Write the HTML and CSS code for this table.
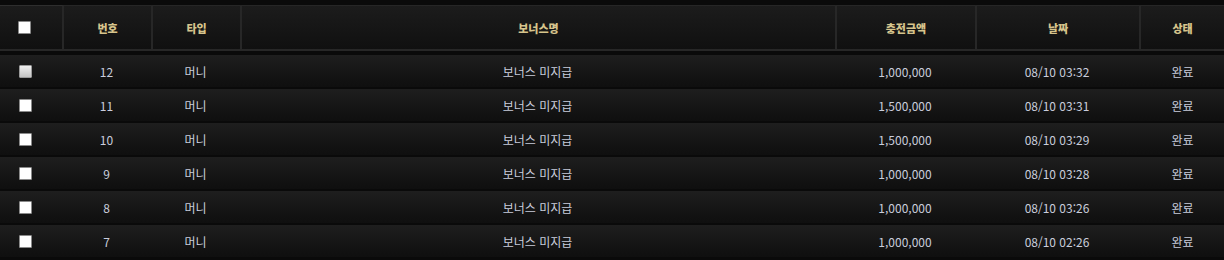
FILE: index.html
```html
<!DOCTYPE html>
<html lang="ko">
<head>
<meta charset="utf-8">
<link rel="stylesheet" href="styles.css">
</head>
<body>
<div class="wrap">
<table class="list">
  <colgroup>
    <col class="c-chk"><col class="c-no"><col class="c-type"><col class="c-name"><col class="c-amt"><col class="c-date"><col class="c-state">
  </colgroup>
  <thead>
    <tr>
      <th class="first"><input type="checkbox" class="chk"></th>
      <th>번호</th>
      <th>타입</th>
      <th>보너스명</th>
      <th>충전금액</th>
      <th>날짜</th>
      <th class="last">상태</th>
    </tr>
  </thead>
  <tbody>
    <tr><td class="first"><input type="checkbox" class="chk dis" disabled></td><td>12</td><td>머니</td><td>보너스 미지급</td><td>1,000,000</td><td>08/10 03:32</td><td class="last">완료</td></tr>
    <tr><td class="first"><input type="checkbox" class="chk"></td><td>11</td><td>머니</td><td>보너스 미지급</td><td>1,500,000</td><td>08/10 03:31</td><td class="last">완료</td></tr>
    <tr><td class="first"><input type="checkbox" class="chk"></td><td>10</td><td>머니</td><td>보너스 미지급</td><td>1,500,000</td><td>08/10 03:29</td><td class="last">완료</td></tr>
    <tr><td class="first"><input type="checkbox" class="chk"></td><td>9</td><td>머니</td><td>보너스 미지급</td><td>1,000,000</td><td>08/10 03:28</td><td class="last">완료</td></tr>
    <tr><td class="first"><input type="checkbox" class="chk"></td><td>8</td><td>머니</td><td>보너스 미지급</td><td>1,000,000</td><td>08/10 03:26</td><td class="last">완료</td></tr>
    <tr><td class="first"><input type="checkbox" class="chk"></td><td>7</td><td>머니</td><td>보너스 미지급</td><td>1,000,000</td><td>08/10 02:26</td><td class="last">완료</td></tr>
  </tbody>
</table>
</div>
</body>
</html>
```
FILE: styles.css
```css
html, body {
  margin: 0;
  padding: 0;
  background: #0a0a0a;
}
.wrap {
  padding-top: 5px;
  width: 1224px;
}
.list {
  width: 1224px;
  border-collapse: separate;
  border-spacing: 0;
  table-layout: fixed;
  font-family: "Noto Sans CJK KR", "Noto Sans", sans-serif;
  font-size: 12px;
}
.c-chk { width: 64px; }
.c-no { width: 89px; }
.c-type { width: 89px; }
.c-name { width: 595px; }
.c-amt { width: 140px; }
.c-date { width: 164px; }
.c-state { width: 83px; }

.list thead th {
  height: 43px;
  padding: 0;
  color: #d6c48c;
  font-weight: 900;
  font-size: 11px;
  text-align: center;
  background: linear-gradient(#1c1c1c, #101010);
  border-top: 1px solid #262626;
  border-right: 2px solid #272727;
  border-bottom: 2px solid #272727;
}
.list thead th.last {
  border-right: 0;
}
.list thead th.first { border-top-color: #2e2e2e; }

.list tbody tr:first-child td {
  border-top: 4px solid #0a0a0a;
}
.list tbody td {
  height: 32px;
  padding: 0 4px 0 0;
  text-align: center;
  color: #c9cddc;
  background: linear-gradient(#1e1e1e, #131313 70%, #0f0f0f);
  border-bottom: 2px solid #0a0a0a;
}
.list tbody td.last {
  padding-right: 0;
}
.list th.first,
.list td.first {
  padding-right: 13px;
}
.chk {
  -webkit-appearance: none;
  appearance: none;
  display: inline-block;
  width: 13px;
  height: 13px;
  margin: 0;
  box-sizing: border-box;
  background: #fff;
  border: 1px solid #8a8a8a;
  border-radius: 1px;
  vertical-align: middle;
  position: relative;
  top: -2px;
}
.chk.dis {
  background: linear-gradient(#f0f0f0, #c4c4c4);
  border-color: #9a9a9a;
}
```
